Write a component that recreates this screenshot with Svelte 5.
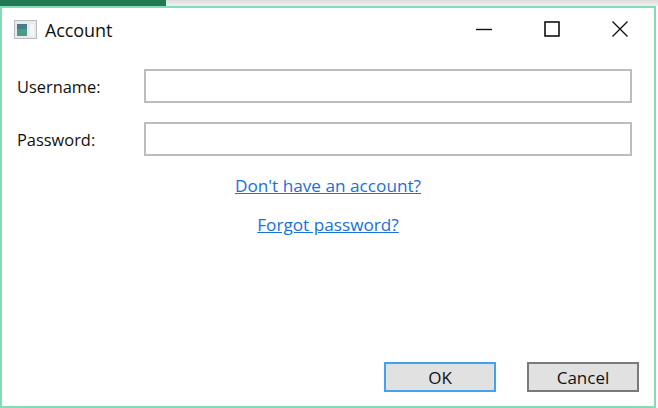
<script>
  let username = $state('');
  let password = $state('');
</script>

<div class="screen">
  <div class="backdrop"><div class="backdrop-app"></div></div>
  <div class="window">
    <header class="titlebar">
      <svg class="app-icon" width="24" height="20" viewBox="0 0 24 20" aria-hidden="true">
        <rect x="0.5" y="0.5" width="22" height="18" fill="#e8eaeb" stroke="#b8bcbf"/>
        <rect x="3" y="4" width="10" height="12" fill="#4a9a84"/>
        <rect x="3" y="4" width="10" height="5" fill="#4a7a8c"/>
        <rect x="16" y="4" width="4" height="12" fill="#f4f6f6"/>
      </svg>
      <span class="title">Account</span>
      <div class="controls">
        <svg width="16" height="16" viewBox="0 0 16 16" aria-hidden="true"><path d="M0 8.5H16" stroke="#111" stroke-width="1.4"/></svg>
        <svg width="16" height="16" viewBox="0 0 16 16" aria-hidden="true"><rect x="1" y="1" width="14" height="14" fill="none" stroke="#111" stroke-width="1.6"/></svg>
        <svg width="16" height="16" viewBox="0 0 16 16" aria-hidden="true"><path d="M0.5 0.5L15.5 15.5M15.5 0.5L0.5 15.5" stroke="#111" stroke-width="1.4"/></svg>
      </div>
    </header>
    <div class="form">
      <label for="user">Username:</label>
      <input id="user" bind:value={username} />
      <label for="pass">Password:</label>
      <input id="pass" type="password" bind:value={password} />
    </div>
    <nav class="links">
      <a href="#signup">Don't have an account?</a>
      <a href="#forgot">Forgot password?</a>
    </nav>
    <footer class="actions">
      <button class="primary">OK</button>
      <button>Cancel</button>
    </footer>
  </div>
</div>

<style>
  :global(body) { margin: 0; background: #fff; }
  .screen {
    width: 658px;
    height: 408px;
    display: flex;
    flex-direction: column;
    overflow: hidden;
    font-family: "Open Sans", "Noto Sans", sans-serif;
    font-size: 16px;
    color: #111;
  }
  .backdrop { height: 6px; background: linear-gradient(#dcdcdc, #f0f0f0); flex: none; }
  .backdrop-app { width: 166px; height: 100%; background: #1f7a54; }
  .window {
    flex: none;
    width: 656px;
    height: 402px;
    box-sizing: border-box;
    border: 2px solid #84dcb4;
    background: #fff;
    display: flex;
    flex-direction: column;
  }
  .titlebar {
    display: flex;
    align-items: center;
    height: 43px;
    padding-left: 12px;
    flex: none;
  }
  .app-icon { margin-right: 7px; }
  .title { font-size: 18px; letter-spacing: -0.1px; }
  .controls {
    margin-left: auto;
    display: flex;
    gap: 52px;
    padding-right: 26px;
    margin-top: -2px;
  }
  .form {
    display: grid;
    grid-template-columns: 127px 488px;
    row-gap: 19px;
    padding: 18px 0 0 15px;
    align-items: center;
  }
  label { font-size: 16.4px; }
  input {
    box-sizing: border-box;
    height: 34px;
    width: 488px;
    border: 2px solid #bcbcc2;
    background: #fff;
    padding: 0 4px;
    font: inherit;
    outline: none;
  }
  .links {
    display: flex;
    flex-direction: column;
    align-items: center;
    gap: 17px;
    margin-top: 19px;
    width: 652px;
    font-size: 17.2px;
  }
  a { color: #1a6fd8; text-decoration: underline; line-height: 22px; }
  .actions {
    margin-top: auto;
    display: flex;
    justify-content: flex-end;
    gap: 31px;
    padding: 0 15px 14px 0;
  }
  button {
    box-sizing: border-box;
    width: 112px;
    height: 30px;
    background: #e1e1e1;
    border: 2px solid #7a7a7a;
    font: inherit;
    font-size: 17px;
    color: #111;
    padding: 0;
  }
  button.primary { border-color: #3fa3f0; }
</style>
